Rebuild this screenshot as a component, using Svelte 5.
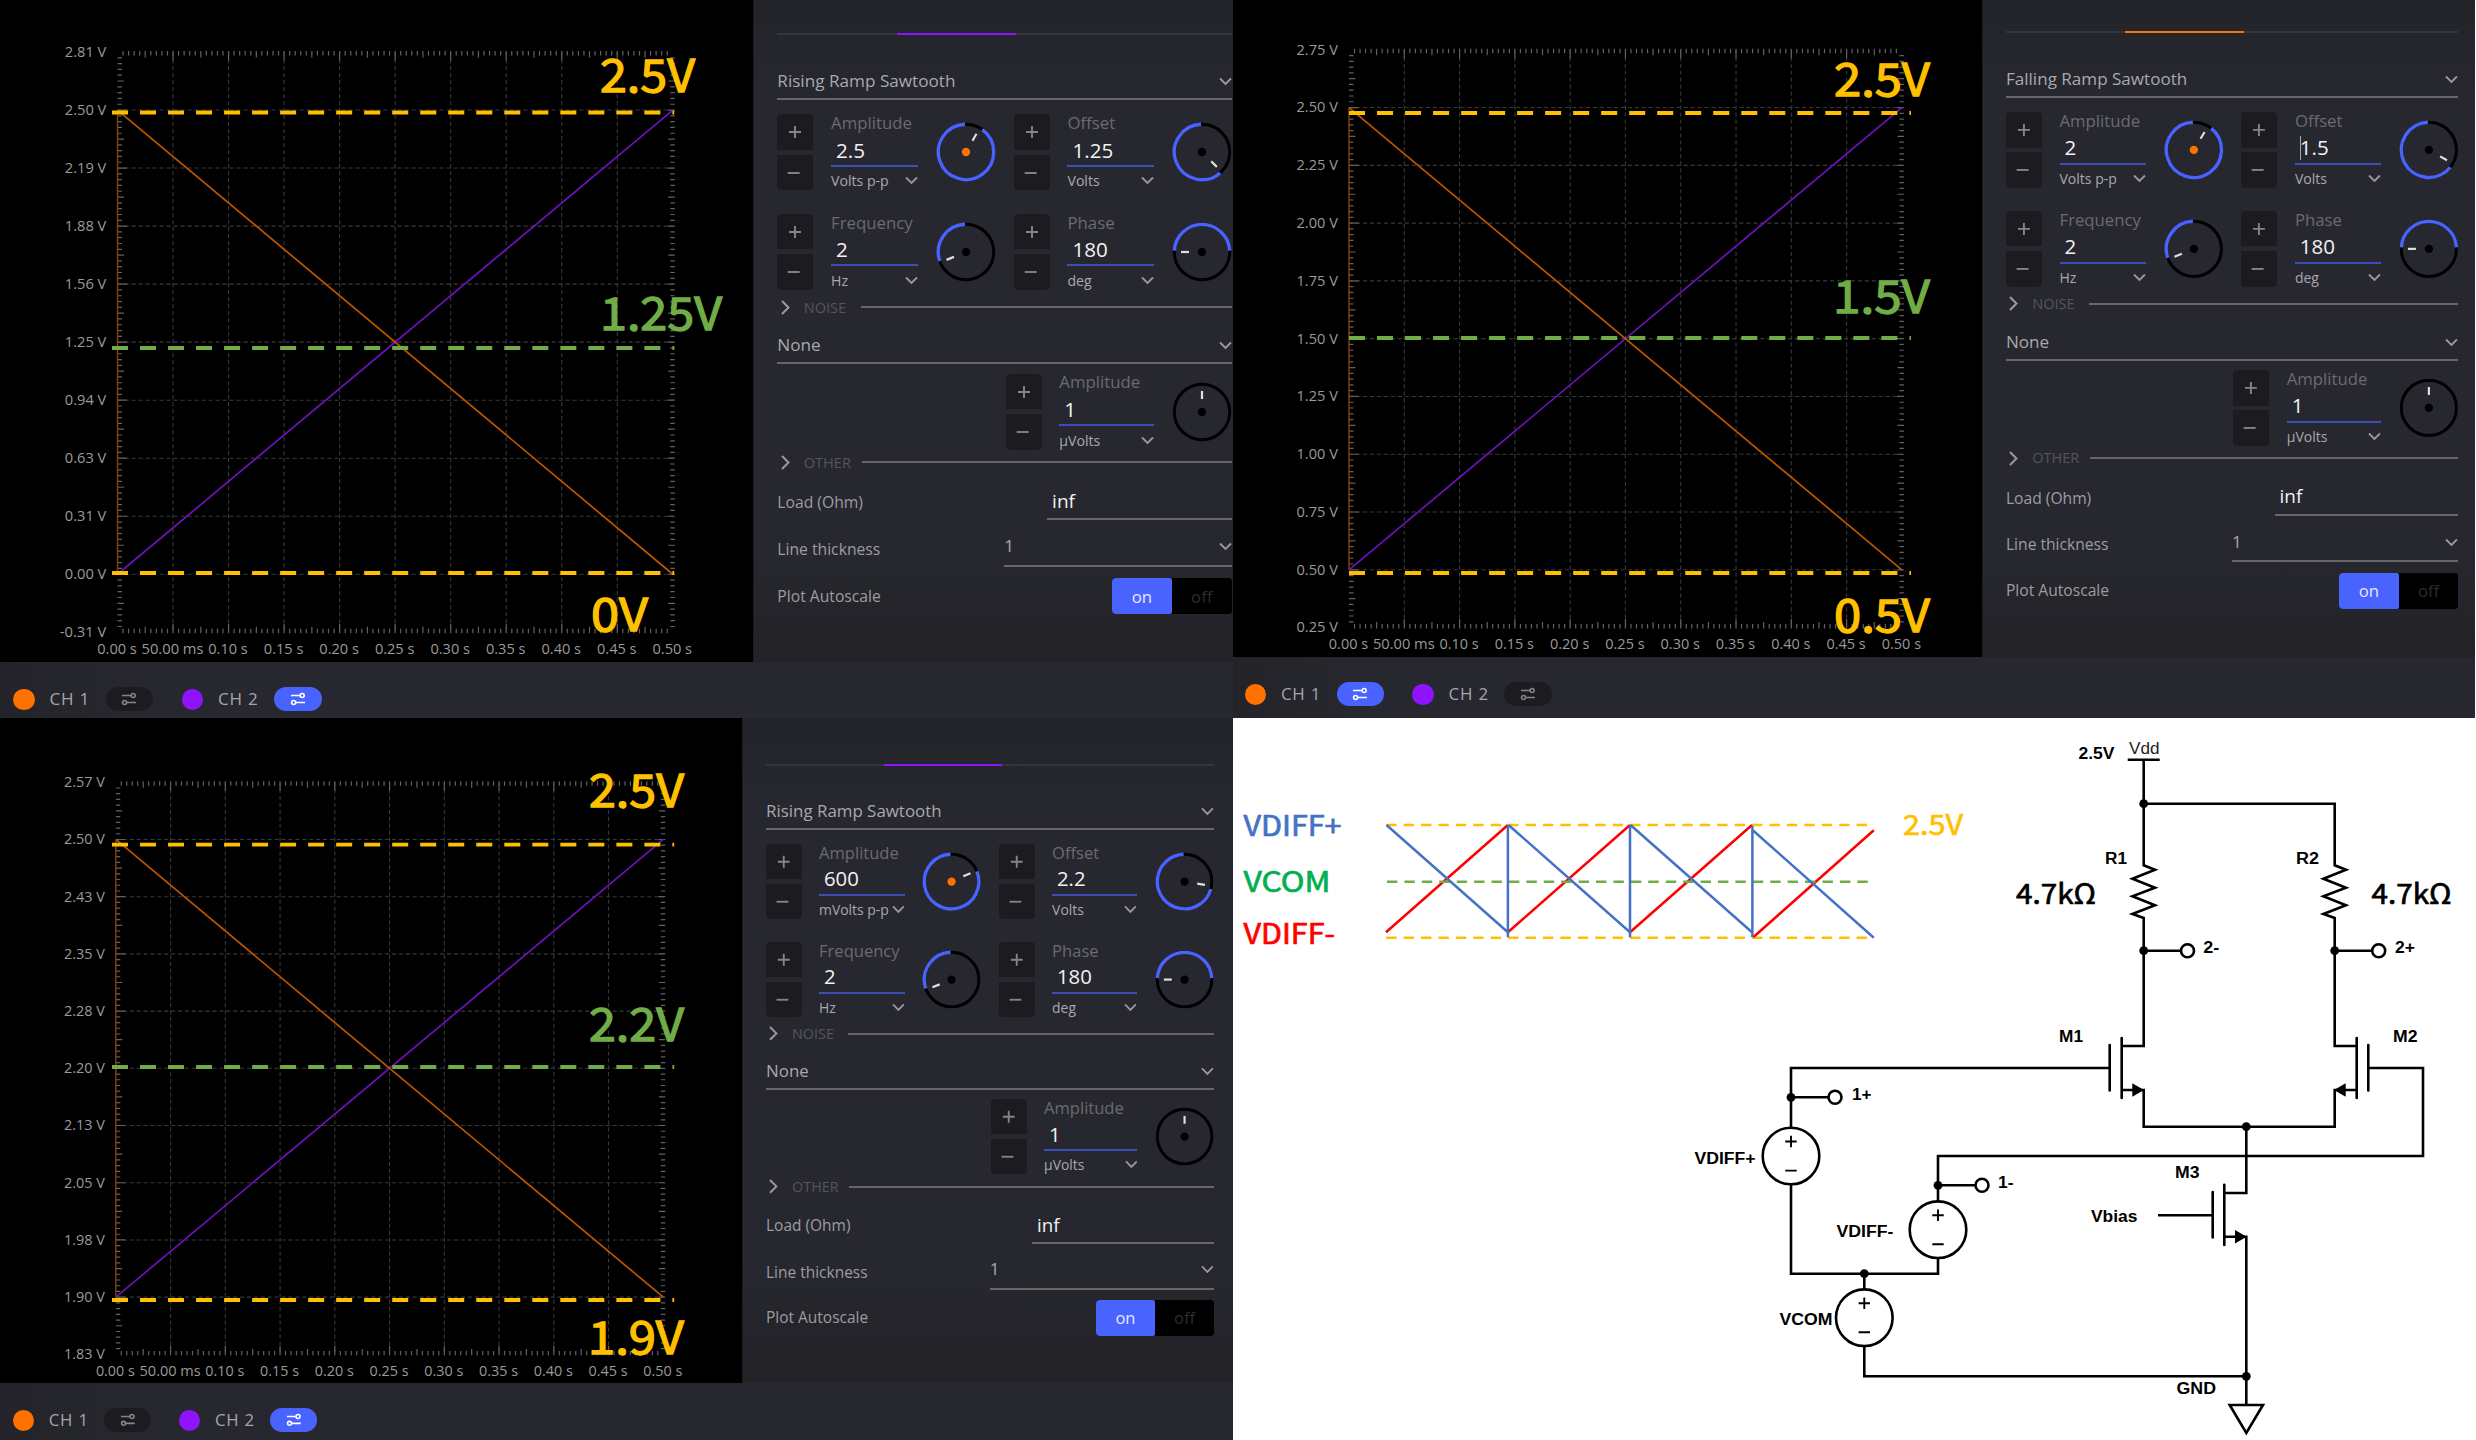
<script>
  const scopes = [
    {
      id: 'a',
      volts: ['2.81', '2.50', '2.19', '1.88', '1.56', '1.25', '0.94', '0.63', '0.31', '0.00', '-0.31'],
      active: 2,
      wave: 'Rising Ramp Sawtooth',
      rows: [
        [
          { label: 'Amplitude', value: '2.5', unit: 'Volts p-p', from: 36, to: 358, tick: 30, hot: true },
          { label: 'Offset', value: '1.25', unit: 'Volts', from: 139, to: 358, tick: 135 }
        ],
        [
          { label: 'Frequency', value: '2', unit: 'Hz', from: 251, to: 358, tick: 248 },
          { label: 'Phase', value: '180', unit: 'deg', from: 273, to: 447, tick: 270 }
        ]
      ]
    },
    {
      id: 'b',
      volts: ['2.75', '2.50', '2.25', '2.00', '1.75', '1.50', '1.25', '1.00', '0.75', '0.50', '0.25'],
      active: 1,
      wave: 'Falling Ramp Sawtooth',
      rows: [
        [
          { label: 'Amplitude', value: '2', unit: 'Volts p-p', from: 39, to: 358, tick: 31, hot: true },
          { label: 'Offset', value: '1.5', unit: 'Volts', from: 129, to: 358, tick: 120, caret: true }
        ],
        [
          { label: 'Frequency', value: '2', unit: 'Hz', from: 251, to: 358, tick: 248 },
          { label: 'Phase', value: '180', unit: 'deg', from: 273, to: 447, tick: 270 }
        ]
      ]
    },
    {
      id: 'c',
      volts: ['2.57', '2.50', '2.43', '2.35', '2.28', '2.20', '2.13', '2.05', '1.98', '1.90', '1.83'],
      active: 2,
      wave: 'Rising Ramp Sawtooth',
      rows: [
        [
          { label: 'Amplitude', value: '600', unit: 'mVolts p-p', from: 68, to: 358, tick: 66, hot: true },
          { label: 'Offset', value: '2.2', unit: 'Volts', from: 106, to: 358, tick: 99 }
        ],
        [
          { label: 'Frequency', value: '2', unit: 'Hz', from: 251, to: 358, tick: 248 },
          { label: 'Phase', value: '180', unit: 'deg', from: 273, to: 447, tick: 270 }
        ]
      ]
    }
  ];
  const noise = { label: 'Amplitude', value: '1', unit: 'µVolts', tick: 0 };
  const times = ['0.00 s', '50.00 ms', '0.10 s', '0.15 s', '0.20 s', '0.25 s', '0.30 s', '0.35 s', '0.40 s', '0.45 s', '0.50 s'];

  // plot frame
  const X0 = 117.5, DX = 55.53, Y0 = 52, DY = 58.03;
  const X1 = X0 + 10 * DX, Y1 = Y0 + 10 * DY;
  const tickLen = (i) => (i % 10 === 0 ? 9.5 : i % 5 === 0 ? 6.5 : 4.5);
  let ticks = '';
  for (let i = 1; i < 100; i++) {
    const x = X0 + (i * DX) / 10, y = Y0 + (i * DY) / 10, l = tickLen(i);
    ticks += `M${x} ${Y0 - 1}v${l}M${x} ${Y1 + 1}v${-l}`;
    ticks += `M${X0} ${y}h${l}M${X1 + 2} ${y}h${-Math.min(l, 7)}`;
  }
  let grid = '';
  for (let i = 1; i < 10; i++) {
    grid += `M${X0 + i * DX} ${Y0}V${Y1}M${X0} ${Y0 + i * DY}H${X1}`;
  }

  const pt = (deg, r) => {
    const a = (deg * Math.PI) / 180;
    return `${(30 + r * Math.sin(a)).toFixed(2)} ${(30 - r * Math.cos(a)).toFixed(2)}`;
  };
  const arc = (f, t) => `M${pt(f, 27.7)}A27.7 27.7 0 ${t - f > 180 ? 1 : 0} 1 ${pt(t, 27.7)}`;

  // callouts drawn above the plots
  const levels = [
    { x: 112, end: 674.2, y: 112.5, c: 'gold' }, { x: 112, end: 674.2, y: 348, c: 'leaf' }, { x: 112, end: 674.2, y: 573, c: 'gold' },
    { x: 1349, end: 1911, y: 113, c: 'gold' }, { x: 1349, end: 1911, y: 338, c: 'leaf' }, { x: 1349, end: 1911, y: 573, c: 'gold' },
    { x: 112, end: 674.2, y: 844.7, c: 'gold' }, { x: 112, end: 674.2, y: 1067, c: 'leaf' }, { x: 112, end: 674.2, y: 1300, c: 'gold' }
  ];
  const callouts = [
    { t: '2.5V', x: 600, y: 92, w: 95, c: 'gold' }, { t: '1.25V', x: 600, y: 330, w: 122, c: 'leaf' }, { t: '0V', x: 591, y: 631, w: 57, c: 'gold' },
    { t: '2.5V', x: 1834, y: 95.7, w: 96, c: 'gold' }, { t: '1.5V', x: 1833, y: 313.3, w: 97, c: 'leaf' }, { t: '0.5V', x: 1834, y: 631.5, w: 96, c: 'gold' },
    { t: '2.5V', x: 589, y: 807.3, w: 95, c: 'gold' }, { t: '2.2V', x: 589, y: 1040.7, w: 95, c: 'leaf' }, { t: '1.9V', x: 588, y: 1353.6, w: 96, c: 'gold' }
  ];

  const sources = [[1791, 1156], [1938, 1229.7], [1864.3, 1317.7]];
  const nodes = [[1791, 1097.3], [1938, 1185.3], [1864.3, 1273.7], [2143.7, 803.7], [2143.7, 950.7], [2334.7, 950.7], [2246.3, 1126.7], [2246.3, 1376.3]];
  const ports = [[1835, 1097.3], [1982, 1185.3], [2187.5, 950.7], [2378.7, 950.7]];
  const names = [
    ['VDIFF+', 1694.5, 1163.7, 61], ['VDIFF-', 1836.5, 1236.7, 57], ['VCOM', 1779.5, 1325, 53],
    ['1+', 1852, 1099.5, 19.5], ['1-', 1998, 1188, 15.5], ['2-', 2203.3, 953.3, 16], ['2+', 2395, 953.3, 20],
    ['M1', 2059, 1042, 24], ['M2', 2393, 1042, 24.5], ['M3', 2175, 1178, 24.5],
    ['R1', 2105, 864.3, 22], ['R2', 2296, 864.3, 23], ['Vbias', 2091, 1222.3, 46.5], ['GND', 2176.5, 1393.7, 39.5], ['2.5V', 2078.5, 758.5, 36]
  ];
  const zig = 'l11.3 4.4l-22.6 9l22.6 9l-22.6 8.6l22.6 9l-22.6 8.7l11.3 4';
</script>

{#snippet chevron()}
  <svg class="chev" width="13" height="9" viewBox="0 0 13 9"><path d="M1 1.5L6.5 7L12 1.5" /></svg>
{/snippet}

{#snippet control(c)}
  <div class="stepper">
    <button><svg width="36" height="36" viewBox="0 0 36 36"><path d="M12 18h12M18 12v12" /></svg></button>
    <button><svg width="36" height="36" viewBox="0 0 36 36"><path d="M10.7 18h12" /></svg></button>
  </div>
  <div class="field">
    <span class="label">{c.label}</span>
    <span class="value" class:caret={c.caret}>{c.value}</span>
    <span class="unit"><span>{c.unit}</span>{@render chevron()}</span>
  </div>
  <svg class="dial" width="60" height="60" viewBox="0 0 60 60">
    <circle class="ring" cx="30" cy="30" r="27.7" />
    {#if c.from}<path class="arc" d={arc(c.from, c.to)} />{/if}
    <path class="hand" d="M{pt(c.tick, 13)}L{pt(c.tick, 21)}" />
    <circle class="hub" class:hot={c.hot} cx="30" cy="30" r="4.2" />
  </svg>
{/snippet}

{#snippet pill(on)}
  <span class="pill" class:on>
    <svg width="16" height="14" viewBox="0 0 16 14"><path d="M1 3.5h9M6 10.5h9" /><circle cx="12.2" cy="3.5" r="2" /><circle cx="3.6" cy="10.5" r="2" /></svg>
  </span>
{/snippet}

<main class="page">
  {#each scopes as s}
    <section class="cell {s.id}">
      <div class="scope">
        <div class="chart">
          <svg width="753" height="662" viewBox="0 0 753 662">
            <path class="grid" d={grid} />
            <path class="ticks" d={ticks} />
            {#each s.volts as v, i}
              <text x="106.3" y={Y0 + i * DY + 4.9} text-anchor="end" textLength={v.length > 4 ? 46.5 : 41.5} lengthAdjust="spacingAndGlyphs">{v} V</text>
            {/each}
            {#each times as t, i}
              <text x={X0 - 0.5 + i * DX} y="654.3" text-anchor="middle" textLength={t.length > 6 ? 62 : 39.5} lengthAdjust="spacingAndGlyphs">{t}</text>
            {/each}
            <path class="purple" d="M{X0} {Y0 + 9 * DY}L{X1} {Y0 + DY}" />
            <path class="orange" d="M{X0} {Y0 + DY}L{X1} {Y0 + 9 * DY}" />
            <path class="orange edge" d="M{X0} {Y0 + DY}V{Y0 + 9 * DY}" />
          </svg>
        </div>
        <aside class="side">
          <div class="inner">
            <div class="tabs"><i></i><i class="cur"></i><i class="rest"></i></div>
            <div class="select wave"><span>{s.wave}</span>{@render chevron()}</div>
            {#each s.rows as row}
              <div class="controls">
                {#each row as c}{@render control(c)}{/each}
              </div>
            {/each}
            <div class="section noise">
              <svg width="9" height="15" viewBox="0 0 9 15"><path d="M1 1L7.5 7.5L1 14" /></svg><span>NOISE</span><hr />
            </div>
            <div class="select none"><span>None</span>{@render chevron()}</div>
            <div class="controls single">{@render control(noise)}</div>
            <div class="section other">
              <svg width="9" height="15" viewBox="0 0 9 15"><path d="M1 1L7.5 7.5L1 14" /></svg><span>OTHER</span><hr />
            </div>
            <div class="option load"><span>Load (Ohm)</span><div class="input">inf</div></div>
            <div class="option thick"><span>Line thickness</span><div class="select small"><span>1</span>{@render chevron()}</div></div>
            <div class="option auto"><span>Plot Autoscale</span><div class="toggle"><b>on</b><b class="off">off</b></div></div>
          </div>
        </aside>
        <footer>
          <i class="dot"></i><span>CH 1</span>{@render pill(s.active === 1)}
          <i class="dot second"></i><span>CH 2</span>{@render pill(s.active === 2)}
        </footer>
      </div>
    </section>
  {/each}

  <section class="cell circuit">
    <svg width="1243" height="722" viewBox="1233 718 1243 722">
      <g class="wave-lines">
        <path class="dash gold" d="M1386.2 825H1869M1386.2 937.7H1869" />
        <path class="red" d="M1386 932.3L1507.9 825M1507.9 932.3L1630 825M1630 932.3L1752 825M1753.5 937L1873.8 830.3" />
        <path class="dash leaf" d="M1387 881.7H1869" />
        <path class="blue" d="M1386.5 825L1507.9 932.3M1508.5 825L1630 932.3M1630.5 825L1752 932.3M1752.5 830L1873.8 937.7M1507.9 826V937.3M1630 826V937.3M1752.4 826V937.3" />
      </g>
      <g class="wave-names">
        <text class="t-blue" x="1243.5" y="835.7" textLength="98" lengthAdjust="spacingAndGlyphs">VDIFF+</text>
        <text class="t-green" x="1243.5" y="892.3" textLength="87" lengthAdjust="spacingAndGlyphs">VCOM</text>
        <text class="t-red" x="1243.5" y="943.7" textLength="91.5" lengthAdjust="spacingAndGlyphs">VDIFF-</text>
        <text class="t-gold" x="1903" y="834.7" textLength="60" lengthAdjust="spacingAndGlyphs">2.5V</text>
        <text x="2016" y="904" textLength="80" lengthAdjust="spacingAndGlyphs">4.7kΩ</text>
        <text x="2371.5" y="904" textLength="80" lengthAdjust="spacingAndGlyphs">4.7kΩ</text>
      </g>
      <g class="wires">
        <path d="M1791 1127.7V1068H2109.7M1791 1097.3H1828M1791 1184.3V1273.7H1938V1258M1864.3 1273.7V1289M1864.3 1346V1376.3H2246.3" />
        <path d="M1938 1201.5V1156H2423V1068H2368.3M1938 1185.3H1975" />
        <path d="M2127.7 759.7H2159.7M2143.7 759.7V865.3{zig}V1046H2121.7M2143.7 950.7H2181" />
        <path d="M2143.7 803.7H2334.7V865.3{zig}V1046H2356.7M2334.7 950.7H2372" />
        <path d="M2121.7 1090H2143.7V1126.7H2334.7V1090H2356.7" />
        <path d="M2246.3 1126.7V1193H2224.3M2158 1215.3H2212.7M2224.3 1236.7H2246.3V1405" />
        <path class="bars" d="M2109.7 1045V1090.5M2121.7 1038V1098M2368.3 1045V1090.5M2356.7 1038V1098M2212.7 1192V1237.5M2224.3 1184.7V1245" />
        <path d="M2229.7 1405H2263L2246.3 1433Z" />
      </g>
      <path d="M2132.3 1083.3L2144 1090L2132.3 1096.7ZM2345.7 1083.3L2334 1090L2345.7 1096.7ZM2235 1230L2246.7 1236.7L2235 1243.4Z" />
      {#each sources as [x, y]}
        <g class="wires">
          <circle cx={x} cy={y} r="28.3" />
          <path class="sign" d="M{x - 5.7} {y - 14.5}h11.4M{x} {y - 20.2}v11.4M{x - 5.7} {y + 14.6}h11.4" />
        </g>
      {/each}
      {#each nodes as [x, y]}<circle cx={x} cy={y} r="4.4" />{/each}
      {#each ports as [x, y]}<circle class="port" cx={x} cy={y} r="6.5" />{/each}
      <g class="names">
        {#each names as [t, x, y, w]}
          <text {x} {y} textLength={w} lengthAdjust="spacingAndGlyphs">{t}</text>
        {/each}
        <text class="vdd" x="2129" y="753.7" textLength="30.5" lengthAdjust="spacingAndGlyphs">Vdd</text>
      </g>
    </svg>
  </section>

  <svg class="overlay" width="2476" height="1440" viewBox="0 0 2476 1440">
    {#each levels as l}<path class="level {l.c}" d="M{l.x} {l.y}H{l.end}" />{/each}
    {#each callouts as c}<text class={c.c} x={c.x} y={c.y} textLength={c.w} lengthAdjust="spacingAndGlyphs">{c.t}</text>{/each}
  </svg>
</main>

<style>
  :global(body) { margin: 0; background: #fff; }
  .page {
    position: relative;
    display: grid;
    grid-template-columns: 1233px 1243px;
    grid-template-rows: 718px 722px;
    width: 2476px;
    height: 1440px;
    overflow: hidden;
    font-family: 'Open Sans', 'Noto Sans', sans-serif;
  }
  .cell { display: grid; overflow: hidden; min-width: 0; min-height: 0; }
  .circuit { background: #fff; }
  .a { --dx: 0px; --dy: 0px; --cw: 753.3px; --ch: 662px; }
  .b { --dx: -1.4px; --dy: -1.8px; --cw: 752.3px; --ch: 660px; margin-right: 1px; }
  .c { --dx: 0px; --dy: 13.2px; --cw: 753px; --ch: 675px; }
  .b .scope { zoom: 0.9957; }
  .c .scope { zoom: 0.9859; }
  .scope {
    display: grid;
    grid-template-columns: var(--cw) 1fr;
    grid-template-rows: var(--ch) 1fr;
    min-width: 0;
    min-height: 0;
  }
  .chart { background: #000; overflow: hidden; }
  .chart svg { display: block; margin: var(--dy) 0 0 var(--dx); }
  .chart text { font-size: 14.3px; fill: #9a9a9a; }
  .grid { stroke: #383838; stroke-width: 1.1; stroke-dasharray: 4.2 2.8; fill: none; }
  .ticks { stroke: #626262; stroke-width: 1.2; }
  .purple { stroke: #6e12bc; stroke-width: 1.7; }
  .orange { stroke: #bc5600; stroke-width: 1.7; }
  .orange.edge { stroke: #8a4208; stroke-width: 1.4; }

  .side {
    background: linear-gradient(#23232a 0, #27272f 90px, #27272f 550px, #222227 100%);
    box-shadow: inset 1px 0 #1c1c21;
    overflow: hidden;
  }
  .inner { width: 454.4px; margin: var(--dy) 0 0 24px; }
  .tabs { display: flex; padding-top: 33px; }
  .tabs i { height: 2px; width: 119.5px; background: #34343c; }
  .tabs .cur { background: #9013fe; }
  .b .tabs .cur { background: #ff7200; }
  .tabs .rest { flex: 1; }
  .select {
    display: flex;
    align-items: flex-end;
    justify-content: space-between;
    box-sizing: border-box;
    border-bottom: 2.1px solid #66666b;
    color: #a9a9ac;
    font-size: 17.15px;
    line-height: 20px;
  }
  .wave { height: 65.3px; padding-bottom: 7.6px; }
  .none { height: 40px; padding-bottom: 7.6px; }
  .chev path { fill: none; stroke: #9a9a9d; stroke-width: 1.8; }
  .select .chev { margin-bottom: 4.5px; }

  .controls {
    display: grid;
    grid-template-columns: 36px 87px 60px 36px 86.4px 60px;
    column-gap: 17.8px;
    align-items: center;
    height: 76px;
    margin-top: 14.2px;
  }
  .controls + .controls { margin-top: 23.3px; }
  .single { grid-template-columns: 36px 94.6px 60px; justify-content: end; margin-top: 9.2px; }
  .stepper { display: flex; flex-direction: column; justify-content: space-between; height: 76px; }
  .stepper button {
    width: 36px;
    height: 35.6px;
    padding: 0;
    border: 0;
    border-radius: 4px 4px 0 0;
    background: #1c1c20;
  }
  .stepper button + button { border-radius: 0 0 4px 4px; }
  .stepper svg { display: block; }
  .stepper path { stroke: #858588; stroke-width: 1.9; }
  .field { display: flex; flex-direction: column; height: 76px; }
  .label { margin-top: -1.1px; font-size: 16.8px; line-height: 20px; color: #6b6b70; white-space: nowrap; }
  .value {
    height: 28.4px;
    margin-top: 3.7px;
    padding-left: 5px;
    border-bottom: 2.1px solid #3d4eb8;
    color: #f2f2f2;
    font-size: 20.6px;
    line-height: 26px;
  }
  .value.caret { background: linear-gradient(#aaa, #aaa) 5px 1px / 1px 24px no-repeat; }
  .unit {
    display: flex;
    align-items: center;
    justify-content: space-between;
    margin-top: 5.3px;
    font-size: 14.1px;
    line-height: 18px;
    color: #a9a9ac;
    white-space: nowrap;
  }
  .unit .chev { margin-bottom: 1px; }
  .dial { display: block; }
  .ring { fill: none; stroke: #000; stroke-width: 3; }
  .arc { fill: none; stroke: #4963ff; stroke-width: 3.4; }
  .hand { stroke: #e0e0e0; stroke-width: 2.2; }
  .hub { fill: #000; }
  .hub.hot { fill: #ff7200; }

  .section { display: flex; align-items: center; color: #55555b; font-size: 14.6px; line-height: 20px; }
  .section svg { margin: 0 14px 0 3.4px; }
  .section path { fill: none; stroke: #9a9a9d; stroke-width: 2; }
  .section span { width: 57px; }
  .section hr { flex: 1; height: 2px; margin: 0; border: 0; background: #66666b; }
  .noise { height: 34.6px; }
  .other { height: 25.4px; }
  .other span { width: 58px; }

  .option {
    display: flex;
    align-items: flex-end;
    justify-content: space-between;
    color: #9d9da1;
    font-size: 15.7px;
    line-height: 20px;
  }
  .load { height: 45px; }
  .load > span { padding-bottom: 7.5px; }
  .input {
    box-sizing: border-box;
    width: 184.6px;
    padding: 0 0 4px 5px;
    border-bottom: 2.1px solid #66666b;
    color: #f2f2f2;
    font-size: 19px;
    line-height: 26px;
  }
  .thick { height: 46.7px; }
  .thick > span { padding-bottom: 7.2px; }
  .small { width: 227.4px; padding-bottom: 8.6px; }
  .small .chev { margin-bottom: 5px; }
  .auto { height: 36px; margin-top: 11px; align-items: center; }
  .toggle { display: flex; border-radius: 4px; background: #000; overflow: hidden; }
  .toggle b {
    width: 59.9px;
    height: 36px;
    background: #4963ff;
    border-radius: 2px;
    color: #e6e8ff;
    font-size: 16.8px;
    font-weight: 400;
    line-height: 37px;
    text-align: center;
  }
  .toggle .off { background: #000; color: #2c2c30; }

  footer {
    grid-column: 1 / -1;
    display: flex;
    align-items: flex-start;
    box-sizing: border-box;
    padding: 25px 0 0 calc(13px + var(--dx));
    background: linear-gradient(90deg, #232329, #27272f 130px);
    color: #a5a5aa;
    font-size: 17px;
    font-weight: 500;
    line-height: 24px;
  }
  .dot { width: 21.5px; height: 21.5px; margin: 1.5px 15px 0 0; border-radius: 50%; background: #ff7200; }
  .dot.second { margin-left: 28.5px; background: #9013fe; }
  footer span:not(.pill) { width: 56px; letter-spacing: 0.8px; white-space: nowrap; }
  .pill {
    display: flex;
    align-items: center;
    justify-content: center;
    width: 47.5px;
    height: 24px;
    border-radius: 12px;
    background: #1c1c20;
  }
  .pill path, .pill circle { fill: none; stroke: #858588; stroke-width: 1.6; }
  .pill.on { background: #4963ff; }
  .pill.on path, .pill.on circle { stroke: #fff; }

  .overlay { position: absolute; left: 0; top: 0; }
  .overlay text {
    font-family: 'Noto Sans CJK SC', 'Noto Sans', sans-serif;
    font-size: 45px;
    stroke-width: 1.3;
  }
  .level { fill: none; stroke-width: 3.8; stroke-dasharray: 16 12.02; }
  .level.gold, .dash.gold { stroke: #ffc000; }
  .level.leaf, .dash.leaf { stroke: #70ad47; }
  text.gold { fill: #ffc000; stroke: #ffc000; }
  text.leaf { fill: #70ad47; stroke: #70ad47; }

  .wave-lines path { fill: none; stroke-width: 2.5; }
  .wave-lines .dash { stroke-width: 2.5; stroke-dasharray: 10.4 7.02; }
  .wave-lines .red { stroke: #f00; stroke-width: 2.5; }
  .wave-lines .blue { stroke: #4472c4; }
  .wave-names text { font-family: 'Noto Sans CJK SC', 'Noto Sans', sans-serif; font-size: 28px; fill: #000; stroke: #000; stroke-width: 0.7; }
  .wave-names .t-blue { fill: #4472c4; stroke: #4472c4; }
  .wave-names .t-green { fill: #00b050; stroke: #00b050; }
  .wave-names .t-red { fill: #f00; stroke: #f00; }
  .wave-names .t-gold { fill: #ffc000; stroke: #ffc000; }
  .wires path, .wires circle { fill: none; stroke: #000; stroke-width: 2.6; }
  .wires .bars { stroke-linecap: round; }
  .wires .sign { stroke-width: 1.9; }
  .port { fill: #fff; stroke: #000; stroke-width: 2.6; }
  .names text { font-family: 'Liberation Sans', sans-serif; font-size: 17.2px; font-weight: 700; }
  .names .vdd { font-weight: 400; fill: #222; }
</style>
